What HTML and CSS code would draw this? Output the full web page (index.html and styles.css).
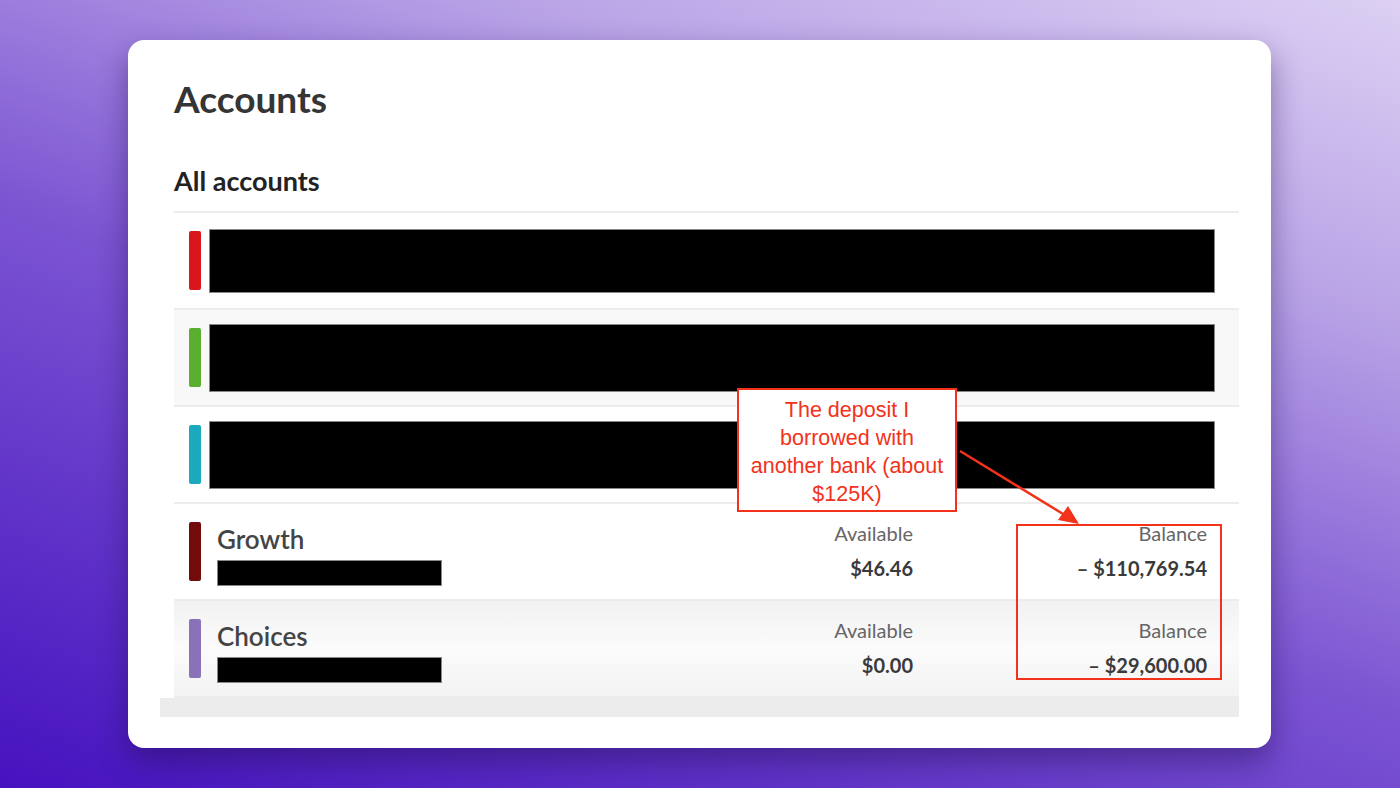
FILE: index.html
```html
<!DOCTYPE html>
<html lang="en">
<head>
    <meta charset="UTF-8">
    <meta name="viewport" content="width=device-width, initial-scale=1.0">
    <title>Accounts</title>
    <link rel="stylesheet" href="styles.css">
</head>
<body>

    <div class="card">
        <div class="page">
            <h1 class="title">Accounts</h1>
            <h2 class="subtitle">All accounts</h2>

            <div class="list">
                <div class="row">
                    <span class="tag red"></span>
                    <div class="redacted big"></div>
                </div>
                <div class="row alt">
                    <span class="tag green"></span>
                    <div class="redacted big tall"></div>
                </div>
                <div class="row">
                    <span class="tag teal"></span>
                    <div class="redacted big tall"></div>
                </div>
                <div class="row account">
                    <span class="tag maroon"></span>
                    <div class="name">
                        <div class="account-name">Growth</div>
                        <div class="redacted small"></div>
                    </div>
                    <div class="amount available">
                        <div class="label">Available</div>
                        <div class="value">$46.46</div>
                    </div>
                    <div class="amount balance">
                        <div class="label">Balance</div>
                        <div class="value">&ndash; $110,769.54</div>
                    </div>
                </div>
                <div class="row account shade">
                    <span class="tag violet"></span>
                    <div class="name">
                        <div class="account-name">Choices</div>
                        <div class="redacted small"></div>
                    </div>
                    <div class="amount available">
                        <div class="label">Available</div>
                        <div class="value">$0.00</div>
                    </div>
                    <div class="amount balance">
                        <div class="label">Balance</div>
                        <div class="value">&ndash; $29,600.00</div>
                    </div>
                </div>
            </div>
            <div class="footer-strip"></div>
        </div>

        <!-- annotation drawn over the screenshot -->
        <div class="note">The deposit I<br>borrowed with<br>another bank (about<br>$125K)</div>
        <div class="highlight"></div>
        <svg class="arrow" width="140" height="90" viewBox="0 0 140 90">
            <line x1="2" y1="2" x2="110" y2="68" stroke="#f2321a" stroke-width="2.5"/>
            <polygon points="121,75 100,71 110,57" fill="#f2321a"/>
        </svg>
    </div>

</body>
</html>
```

FILE: styles.css
```css
body {
    margin: 0;
    height: 788px;
    overflow: hidden;
    background: linear-gradient(20deg, #4612bf 0%, #7b54d2 45%, #b9a3e6 75%, #dcd0f3 100%);
    font-family: "Lato", "Open Sans", sans-serif;
    padding: 40px 0 0 128px;
    box-sizing: border-box;
}

.card {
    position: relative;
    width: 1143px;
    height: 708px;
    background-color: white;
    border-radius: 16px;
    box-shadow: 0 14px 30px rgba(30, 10, 80, 0.45);
    box-sizing: border-box;
    padding: 0 32px 0 32px;
}

.page {
    display: flex;
    flex-direction: column;
}

.title {
    margin: 0;
    padding: 37px 0 0 14px;
    font-size: 37px;
    font-weight: 700;
    color: #353535;
    line-height: 44px;
}

.subtitle {
    margin: 0;
    padding: 45px 0 0 14px;
    font-size: 27px;
    font-weight: 700;
    color: #222;
    line-height: 30px;
}

.list {
    margin: 15px 0 0 14px;
    border-top: 2px solid #ececec;
}

.row {
    display: flex;
    align-items: center;
    height: 97px;
    border-bottom: 2px solid #ececec;
    padding-left: 15px;
    box-sizing: border-box;
}

.row.alt {
    background-color: #f8f8f8;
}

.row.shade {
    background: linear-gradient(180deg, #f2f2f2 0%, #fbfbfb 50%, #f3f3f3 100%);
}

.tag {
    width: 12px;
    height: 59px;
    border-radius: 2px;
    flex-shrink: 0;
}

.red { background-color: #d9161c; }
.green { background-color: #5aae30; }
.teal { background-color: #1ba9bd; }
.maroon { background-color: #720c0c; }
.violet { background-color: #8a72b8; }

.redacted {
    background-color: black;
    border: 1px solid #888;
    box-sizing: border-box;
}

.redacted.big {
    margin-left: 8px;
    width: 1006px;
    height: 64px;
}

.redacted.tall {
    height: 68px;
}

.redacted.small {
    width: 225px;
    height: 26px;
    margin-top: 6px;
}

.name {
    margin-left: 16px;
    margin-top: 6px;
    flex: 1;
}

.account-name {
    font-size: 26px;
    font-weight: 600;
    color: #444;
    line-height: 30px;
}

.amount {
    text-align: right;
    font-size: 20px;
    line-height: 35px;
    margin-top: -2px;
}

.available {
    width: 200px;
}

.balance {
    width: 326px;
    padding-right: 32px;
    box-sizing: border-box;
}

.label {
    color: #666;
}

.value {
    font-weight: 700;
    color: #3a3a3a;
}

.footer-strip {
    height: 19px;
    background-color: #ececec;
}

.note {
    position: absolute;
    left: 609px;
    top: 348px;
    width: 220px;
    height: 124px;
    box-sizing: border-box;
    border: 2px solid #f2321a;
    background-color: white;
    color: #f2321a;
    font-family: "Liberation Sans", Arial, sans-serif;
    font-size: 21.5px;
    line-height: 28px;
    text-align: center;
    padding: 6px 0 0 0;
    white-space: nowrap;
}

.highlight {
    position: absolute;
    left: 888px;
    top: 484px;
    width: 206px;
    height: 156px;
    box-sizing: border-box;
    border: 2px solid #f2321a;
}

.arrow {
    position: absolute;
    left: 830px;
    top: 409px;
}
```
